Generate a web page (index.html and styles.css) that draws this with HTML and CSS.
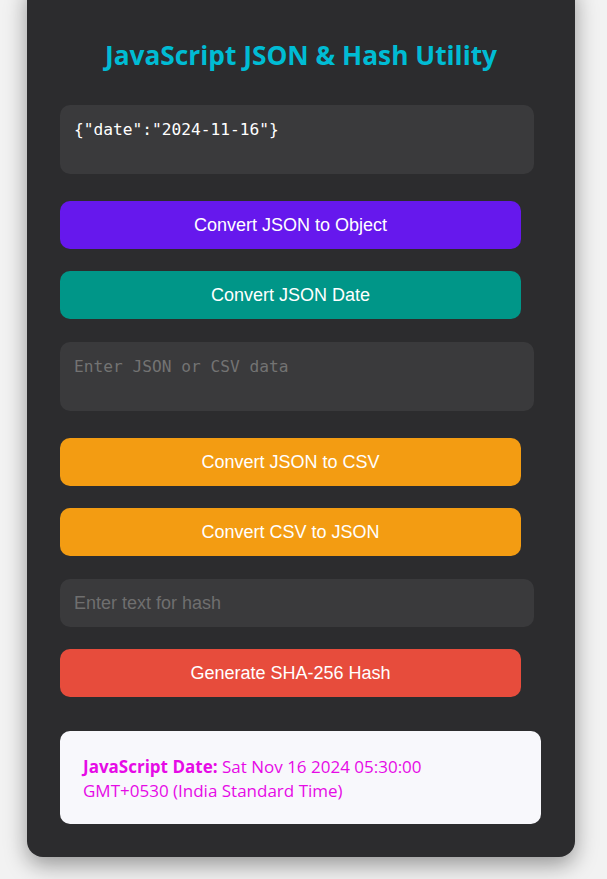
FILE: index.html
```html
<!DOCTYPE html>
<html lang="en">
<head>
<meta charset="utf-8">
<title>JavaScript JSON &amp; Hash Utility</title>
<link rel="stylesheet" href="styles.css">
</head>
<body>
<div class="card">
  <h1 class="title">JavaScript JSON &amp; Hash Utility</h1>
  <textarea class="field area">{"date":"2024-11-16"}</textarea>
  <button class="btn btn-purple gap-lg">Convert JSON to Object</button>
  <button class="btn btn-teal gap-sm">Convert JSON Date</button>
  <textarea class="field area gap-md" placeholder="Enter JSON or CSV data"></textarea>
  <button class="btn btn-orange gap-lg">Convert JSON to CSV</button>
  <button class="btn btn-orange gap-sm">Convert CSV to JSON</button>
  <input class="field input gap-md" type="text" placeholder="Enter text for hash">
  <button class="btn btn-red gap-sm">Generate SHA-256 Hash</button>
  <div class="result">
    <p class="result-text"><strong>JavaScript Date:</strong> Sat Nov 16 2024 05:30:00 GMT+0530 (India Standard Time)</p>
  </div>
</div>
</body>
</html>
```

FILE: styles.css
```css
html, body {
  margin: 0;
  padding: 0;
}
body {
  background: #f2f2f2;
  font-family: "Open Sans", "Noto Sans", sans-serif;
  height: 879px;
  overflow: hidden;
}
.card {
  box-sizing: border-box;
  width: 548px;
  margin: -20px 0 0 27px;
  padding: 59px 33px 33px 33px;
  background: #2c2c2e;
  border-radius: 16px;
  box-shadow: 0 8px 22px rgba(0, 0, 0, 0.38);
  display: flex;
  flex-direction: column;
  align-items: flex-start;
}
.title {
  align-self: center;
  margin: 0 0 34px 0;
  font-size: 26.3px;
  line-height: 32px;
  font-weight: 700;
  color: #00bcd4;
}
.field {
  display: block;
  box-sizing: border-box;
  width: 474px;
  border: none;
  outline: none;
  background: #3a3a3c;
  border-radius: 10px;
  color: #ffffff;
  margin: 0;
}
.area {
  height: 69px;
  padding: 15px 14px 11px 14px;
  font-family: "DejaVu Sans Mono", monospace;
  font-size: 16.2px;
  line-height: 20px;
  resize: none;
}
.area::placeholder {
  color: #737373;
}
.input {
  height: 48px;
  padding: 0 14px;
  font-family: "Liberation Sans", Arial, sans-serif;
  font-size: 18px;
}
.input::placeholder {
  color: #6f6f6f;
}
.btn {
  display: block;
  width: 461px;
  height: 48px;
  border: none;
  border-radius: 10px;
  color: #ffffff;
  font-family: "Liberation Sans", Arial, sans-serif;
  font-size: 18px;
  margin: 0;
  padding: 0;
}
.gap-lg { margin-top: 27px; }
.gap-md { margin-top: 23px; }
.gap-sm { margin-top: 22px; }
.btn-purple { background: #6618ed; }
.btn-teal { background: #009688; }
.btn-orange { background: #f39c12; }
.btn-red { background: #e74c3c; }
.result {
  box-sizing: border-box;
  width: 481px;
  margin-top: 34px;
  padding: 24px 23px 21px 23px;
  background: #f8f8fc;
  border-radius: 10px;
}
.result-text {
  margin: 0;
  max-width: 400px;
  font-size: 17px;
  line-height: 24px;
  color: #e60ae6;
}
.result-text strong {
  font-weight: 700;
}
```
